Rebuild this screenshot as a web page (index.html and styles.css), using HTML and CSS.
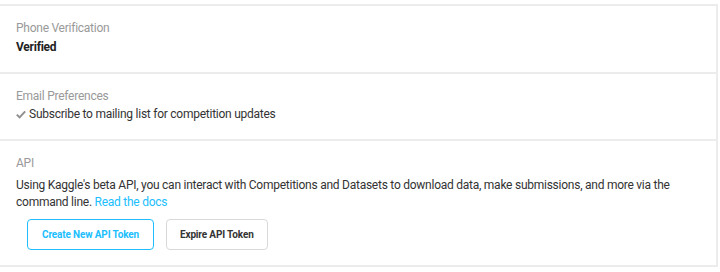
FILE: index.html
```html
<!DOCTYPE html>
<html lang="en">
<head>
    <meta charset="UTF-8">
    <meta name="viewport" content="width=device-width, initial-scale=1.0">
    <title>Account Settings</title>
    <link rel="stylesheet" href="styles.css">
</head>
<body>
    <div class="settings">
      <div class="section">
        <div class="section-label">Phone Verification</div>
        <div class="section-value">Verified</div>
      </div>
      <div class="section">
        <div class="section-label">Email Preferences</div>
        <label class="check-row">
          <svg class="check" width="10" height="9" viewBox="0 0 10 9">
            <path d="M0.8 4.6 L3.6 7.4 L9.2 1.4" fill="none" stroke="#8f8f8f" stroke-width="2"/>
          </svg>
          Subscribe to mailing list for competition updates
        </label>
      </div>
      <div class="section">
        <div class="section-label">API</div>
        <p class="section-text">Using Kaggle's beta API, you can interact with Competitions and Datasets to download data, make submissions, and more via the command line. <a href="#">Read the docs</a></p>
        <div class="actions">
          <button class="btn btn-primary">Create New API Token</button>
          <button class="btn">Expire API Token</button>
        </div>
      </div>
    </div>
</body>
</html>
```

FILE: styles.css
```css
body {
    font-family: Roboto, "Liberation Sans", sans-serif;
    letter-spacing: -0.25px;
    background-color: #fff;
    margin: 0;
    color: #333;
}
.settings {
    border-top: 2px solid #ececec;
    border-right: 2px solid #ececec;
    margin-top: 4px;
    margin-right: 2px;
}
.section {
    border-bottom: 2px solid #ececec;
    padding: 14px 16px 17px;
}
.section-label {
    font-size: 12px;
    color: #999;
    line-height: 16px;
}
.section-value {
    font-size: 12px;
    font-weight: bold;
    color: #222;
    margin-top: 3px;
    line-height: 16px;
}
.check-row {
    display: flex;
    align-items: center;
    gap: 3px;
    font-size: 12px;
    margin-top: 2px;
    line-height: 16px;
}
.section-text {
    font-size: 12px;
    line-height: 17px;
    margin: 6px 0 0;
}
.section-text a {
    color: #20beff;
    text-decoration: none;
}
.actions {
    display: flex;
    gap: 12px;
    padding: 8px 11px 0;
    margin-bottom: -2px;
}
.btn {
    background-color: #fff;
    border: 1px solid #d9d9d9;
    border-radius: 4px;
    color: #333;
    font-family: inherit;
    font-size: 10px;
    font-weight: bold;
    letter-spacing: -0.15px;
    height: 31px;
    padding: 0 13px;
    cursor: pointer;
}
.btn-primary {
    border-color: #20beff;
    color: #20beff;
    padding: 0 14px;
}
```
